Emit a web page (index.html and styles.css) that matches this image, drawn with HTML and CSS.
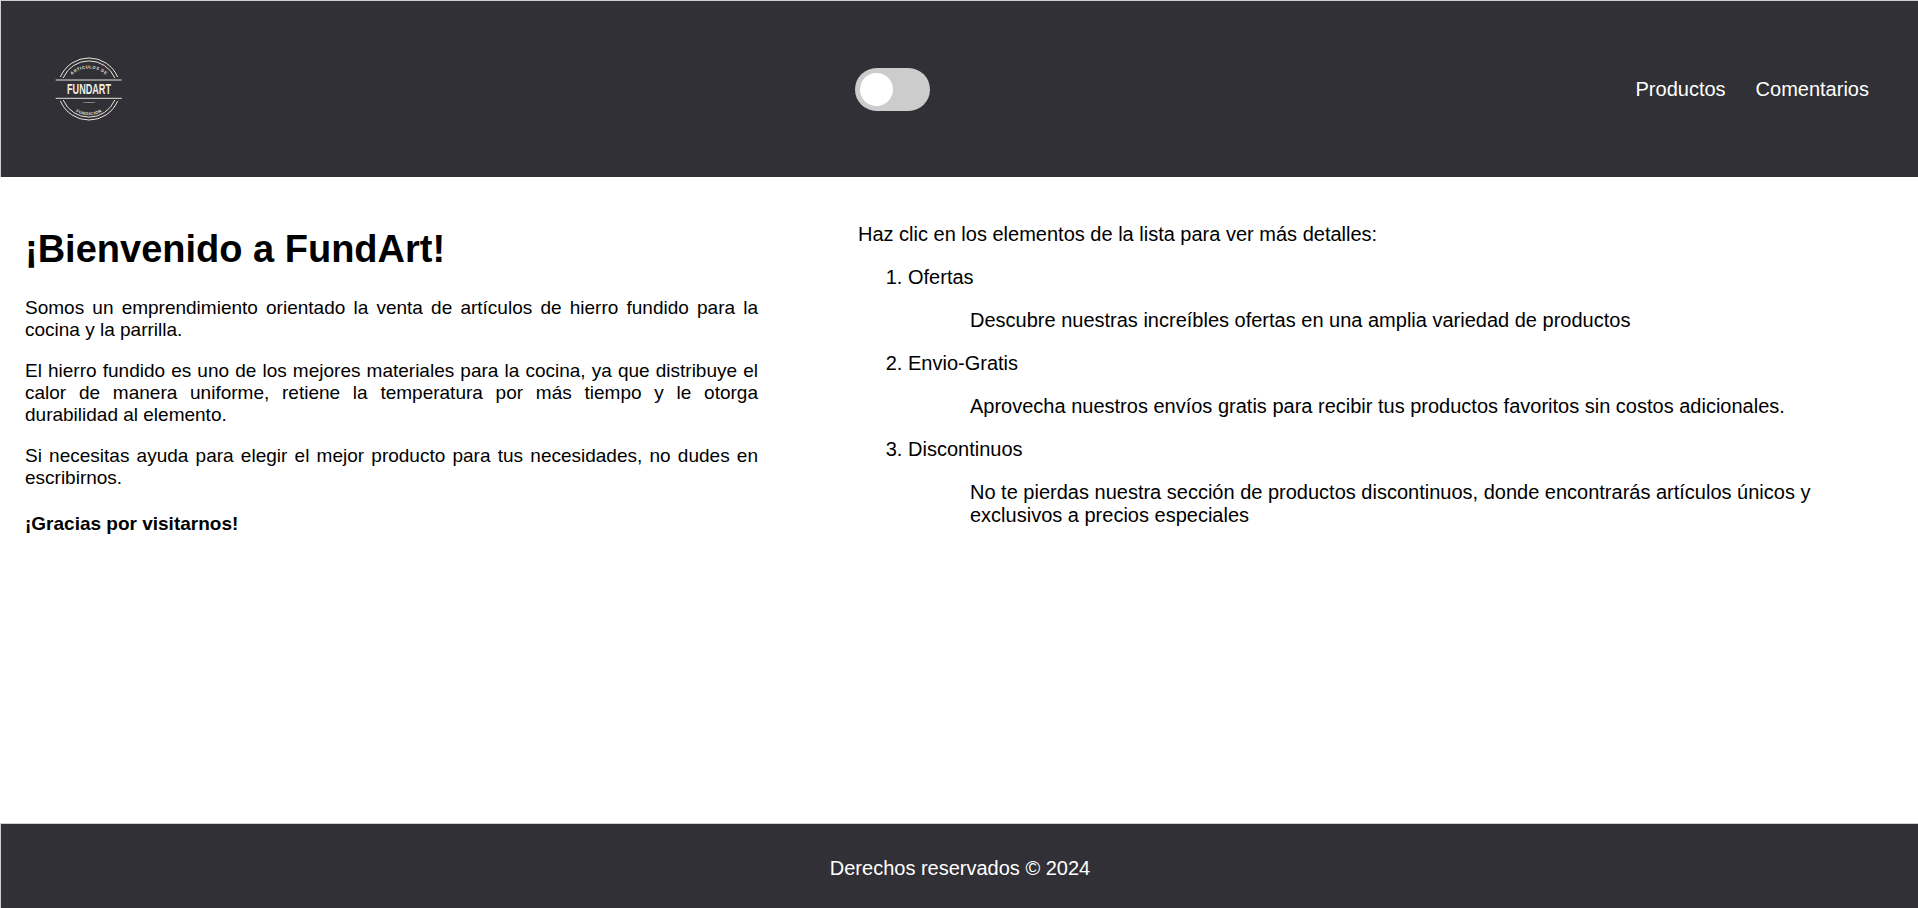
FILE: index.html
```html
<!DOCTYPE html>
<html lang="es">
<head>
    <meta charset="UTF-8">
    <meta name="viewport" content="width=device-width, initial-scale=1.0">
    <title>FundArt</title>
    <link rel="stylesheet" href="styles.css">
</head>
<body>
    <header class="site-header">
        <a class="logo" href="#" aria-label="FundArt">
            <svg width="70" height="70" viewBox="0 0 70 70">
                <path d="M6.4 23 A31 31 0 0 1 63.6 23" class="logo-line"/>
                <path d="M9.2 24 A28 28 0 0 1 60.8 24" class="logo-line"/>
                <path d="M6.4 47 A31 31 0 0 0 63.6 47" class="logo-line"/>
                <path d="M9.2 46 A28 28 0 0 0 60.8 46" class="logo-line"/>
                <path d="M1.7 26 H67.7 M1.7 44.3 H67.7" class="logo-line"/>
                <defs>
                    <path id="arcTop" d="M11 32.3 A25 25 0 0 1 59 32.3"/>
                    <path id="arcBottom" d="M14.2 49.3 A24 24 0 0 0 55.8 49.3"/>
                </defs>
                <text class="logo-small"><textPath href="#arcTop" startOffset="50%" text-anchor="middle">ARTICULOS DE</textPath></text>
                <text class="logo-small"><textPath href="#arcBottom" startOffset="50%" text-anchor="middle">FUNDICION</textPath></text>
                <text x="13" y="40" textLength="44" lengthAdjust="spacingAndGlyphs" class="logo-name">FUNDART</text>
                <text x="35" y="49" text-anchor="middle" class="logo-tiny">FUNDIDO</text>
            </svg>
        </a>
        <label class="switch">
            <input type="checkbox">
            <span class="slider"></span>
        </label>
        <nav class="site-nav">
            <a href="#">Productos</a>
            <a href="#">Comentarios</a>
        </nav>
    </header>

    <main class="content">
        <section class="intro">
            <h1>¡Bienvenido a FundArt!</h1>
            <p>Somos un emprendimiento orientado la venta de artículos de hierro fundido para la cocina y la parrilla.</p>
            <p>El hierro fundido es uno de los mejores materiales para la cocina, ya que distribuye el calor de manera uniforme, retiene la temperatura por más tiempo y le otorga durabilidad al elemento.</p>
            <p>Si necesitas ayuda para elegir el mejor producto para tus necesidades, no dudes en escribirnos.</p>
            <p class="thanks"><strong>¡Gracias por visitarnos!</strong></p>
        </section>
        <section class="details">
            <p>Haz clic en los elementos de la lista para ver más detalles:</p>
            <ol>
                <li>Ofertas
                    <p class="detail">Descubre nuestras increíbles ofertas en una amplia variedad de productos</p>
                </li>
                <li>Envio-Gratis
                    <p class="detail">Aprovecha nuestros envíos gratis para recibir tus productos favoritos sin costos adicionales.</p>
                </li>
                <li>Discontinuos
                    <p class="detail">No te pierdas nuestra sección de productos discontinuos, donde encontrarás artículos únicos y exclusivos a precios especiales</p>
                </li>
            </ol>
        </section>
    </main>

    <footer class="site-footer">
        <p>Derechos reservados © 2024</p>
    </footer>
</body>
</html>
```
FILE: styles.css
```css
/* Basic Styles */
body {
    font-family: "Liberation Sans", Arial, sans-serif;
    font-size: 19px;
    color: #000;
    background-color: #fff;
    margin: 0;
    min-height: 100vh;
    display: flex;
    flex-direction: column;
}

/* Header */
.site-header {
    height: 176px;
    background-color: #313036;
    border-top: 1px solid #cfcfcf;
    border-left: 1px solid #cfcfcf;
    padding: 0 49px 0 53px;
    display: flex;
    align-items: center;
    justify-content: space-between;
}

.logo {
    display: block;
    height: 70px;
}

.logo-line {
    fill: none;
    stroke: #e8e6da;
    stroke-width: 1;
}

.logo-small {
    font-size: 4.2px;
    font-weight: bold;
    letter-spacing: 0.5px;
    fill: #e8e6da;
}

.logo-name {
    font-size: 15px;
    font-weight: bold;
    fill: #f0eee2;
}

.logo-tiny {
    font-size: 2.5px;
    fill: #e8e6da;
}

/* Toggle */
.switch {
    display: block;
    width: 75px;
    height: 43px;
    margin-left: 25px;
}

.switch input {
    display: none;
}

.slider {
    display: block;
    box-sizing: border-box;
    width: 100%;
    height: 100%;
    padding: 5px;
    background-color: #ccc;
    border-radius: 22px;
    cursor: pointer;
}

.slider::before {
    content: "";
    display: block;
    width: 33px;
    height: 33px;
    background-color: #fff;
    border-radius: 50%;
}

.site-nav {
    display: flex;
    gap: 30px;
}

.site-nav a {
    color: #fff;
    font-size: 20px;
    text-decoration: none;
}

/* Main */
.content {
    flex: 1;
    display: flex;
    padding: 22px 25px 0;
    gap: 100px;
}

.intro {
    width: 733px;
    flex-shrink: 0;
}

.intro h1 {
    font-size: 38px;
    margin: 29px 0 26px;
}

.intro p {
    text-align: justify;
    margin: 19px 0;
}

.intro .thanks {
    margin-top: 24px;
}

.details {
    flex: 1;
    font-size: 20px;
    padding-top: 4px;
}

.details p {
    margin: 20px 0;
}

.details ol {
    margin: 0;
    padding-left: 50px;
}

.details li {
    margin-bottom: 20px;
}

.details .detail {
    margin: 20px 0 0 62px;
}

/* Footer */
.site-footer {
    height: 79px;
    padding: 5px 0 0 1px;
    background-color: #313036;
    border-top: 1px solid #cfcfcf;
    border-left: 1px solid #cfcfcf;
    color: #fff;
    font-size: 20px;
    display: flex;
    align-items: center;
    justify-content: center;
}

.site-footer p {
    margin: 0;
}
```
